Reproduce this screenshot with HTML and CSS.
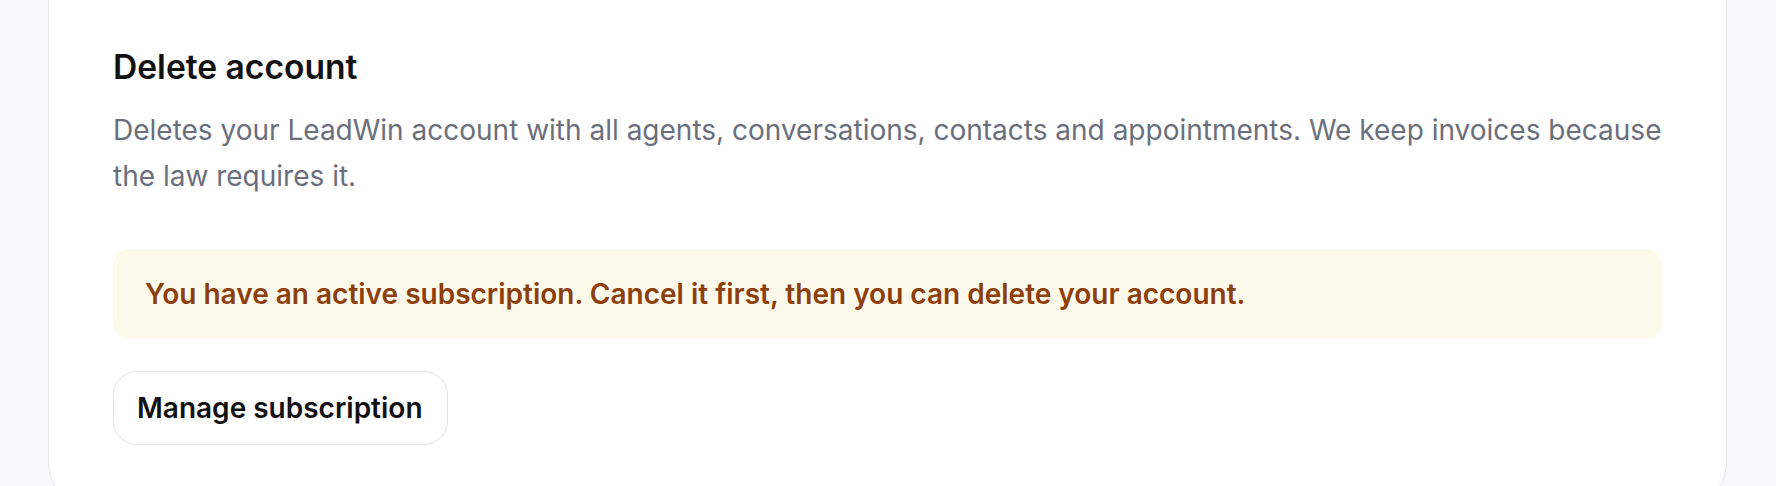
FILE: index.html
```html
<!DOCTYPE html>
<html lang="en">
<head>
<meta charset="utf-8">
<title>Delete account</title>
<link rel="stylesheet" href="styles.css">
</head>
<body>
<main class="page">
  <section class="card">
    <h2 class="title">Delete account</h2>
    <p class="desc">Deletes your LeadWin account with all agents, conversations, contacts and appointments. We keep invoices because the law requires it.</p>
    <div class="alert">You have an active subscription. Cancel it first, then you can delete your account.</div>
    <div class="actions">
      <button class="btn" type="button">Manage subscription</button>
    </div>
  </section>
</main>
</body>
</html>
```

FILE: styles.css
```css
* { box-sizing: border-box; }
html, body { margin: 0; padding: 0; }
body {
  background: #f8f8fd;
  font-family: Inter, "Noto Sans", sans-serif;
  overflow: hidden;
}
.page {
  padding: 0 49px 0 48px;
}
.card {
  background: #ffffff;
  border: 1px solid #e6e6ea;
  border-top: 0;
  border-radius: 0 0 48px 48px;
  padding: 47px 64px 64px;
}
.title {
  margin: 0;
  font-size: 33.6px;
  line-height: 40px;
  font-weight: 600;
  color: #111111;
}
.desc {
  margin: 21px 0 0;
  font-size: 28px;
  line-height: 45.5px;
  font-weight: 400;
  color: #6b6f7b;
}
.alert {
  margin-top: 50px;
  background: #fefaeb;
  border-radius: 16px;
  padding: 28px 32px;
  font-size: 28px;
  line-height: 34px;
  font-weight: 600;
  color: #8c3f0c;
}
.actions {
  margin-top: 32px;
  display: flex;
}
.btn {
  height: 74px;
  display: inline-flex;
  align-items: center;
  padding: 0 24px 0 23px;
  border: 1.5px solid #e3e3e6;
  border-radius: 24px;
  background: #ffffff;
  font-family: Inter, "Noto Sans", sans-serif;
  font-size: 28px;
  font-weight: 600;
  color: #111111;
}
```
